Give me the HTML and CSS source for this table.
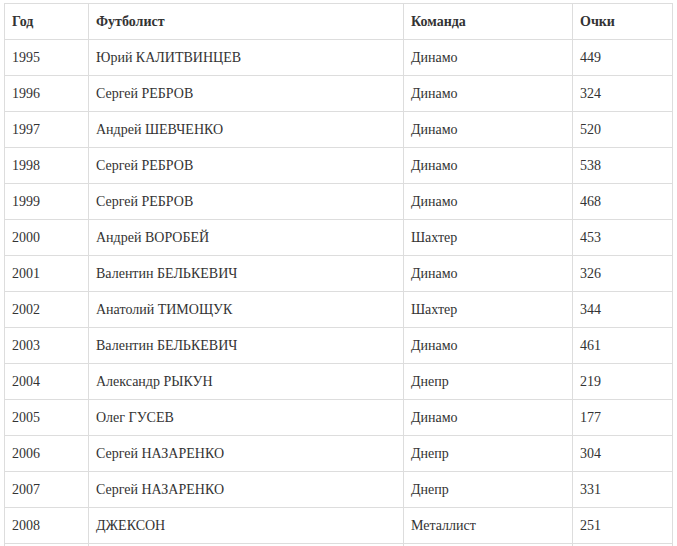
FILE: index.html
```html
<!DOCTYPE html>
<html lang="ru">
<head>
<meta charset="utf-8">
<title>Футболист года</title>
<link rel="stylesheet" href="styles.css">
</head>
<body>
<div class="wrap">
<table class="stats">
<colgroup>
<col class="c-year"><col class="c-player"><col class="c-team"><col class="c-points">
</colgroup>
<thead>
<tr><th>Год</th><th>Футболист</th><th>Команда</th><th>Очки</th></tr>
</thead>
<tbody>
<tr><td>1995</td><td>Юрий КАЛИТВИНЦЕВ</td><td>Динамо</td><td>449</td></tr>
<tr><td>1996</td><td>Сергей РЕБРОВ</td><td>Динамо</td><td>324</td></tr>
<tr><td>1997</td><td>Андрей ШЕВЧЕНКО</td><td>Динамо</td><td>520</td></tr>
<tr><td>1998</td><td>Сергей РЕБРОВ</td><td>Динамо</td><td>538</td></tr>
<tr><td>1999</td><td>Сергей РЕБРОВ</td><td>Динамо</td><td>468</td></tr>
<tr><td>2000</td><td>Андрей ВОРОБЕЙ</td><td>Шахтер</td><td>453</td></tr>
<tr><td>2001</td><td>Валентин БЕЛЬКЕВИЧ</td><td>Динамо</td><td>326</td></tr>
<tr><td>2002</td><td>Анатолий ТИМОЩУК</td><td>Шахтер</td><td>344</td></tr>
<tr><td>2003</td><td>Валентин БЕЛЬКЕВИЧ</td><td>Динамо</td><td>461</td></tr>
<tr><td>2004</td><td>Александр РЫКУН</td><td>Днепр</td><td>219</td></tr>
<tr><td>2005</td><td>Олег ГУСЕВ</td><td>Динамо</td><td>177</td></tr>
<tr><td>2006</td><td>Сергей НАЗАРЕНКО</td><td>Днепр</td><td>304</td></tr>
<tr><td>2007</td><td>Сергей НАЗАРЕНКО</td><td>Днепр</td><td>331</td></tr>
<tr><td>2008</td><td>ДЖЕКСОН</td><td>Металлист</td><td>251</td></tr>
<tr class="tail"><td></td><td></td><td></td><td></td></tr>
</tbody>
</table>
</div>
</body>
</html>
```
FILE: styles.css
```css
html, body {
  margin: 0;
  padding: 0;
  background: #fff;
}
.wrap {
  padding: 3px 0 0 4px;
}
.stats {
  border-collapse: collapse;
  table-layout: fixed;
  width: 668px;
  font-family: "Liberation Serif", "Times New Roman", serif;
  font-size: 14px;
  color: #333;
}
.c-year { width: 84px; }
.c-player { width: 315px; }
.c-team { width: 169px; }
.c-points { width: 100px; }
.stats th,
.stats td {
  border: 1px solid #ddd;
  padding: 8px 7px;
  line-height: 19px;
  text-align: left;
  vertical-align: top;
}
.stats th {
  font-weight: bold;
}
.stats .tail td {
  height: 19px;
}
```
